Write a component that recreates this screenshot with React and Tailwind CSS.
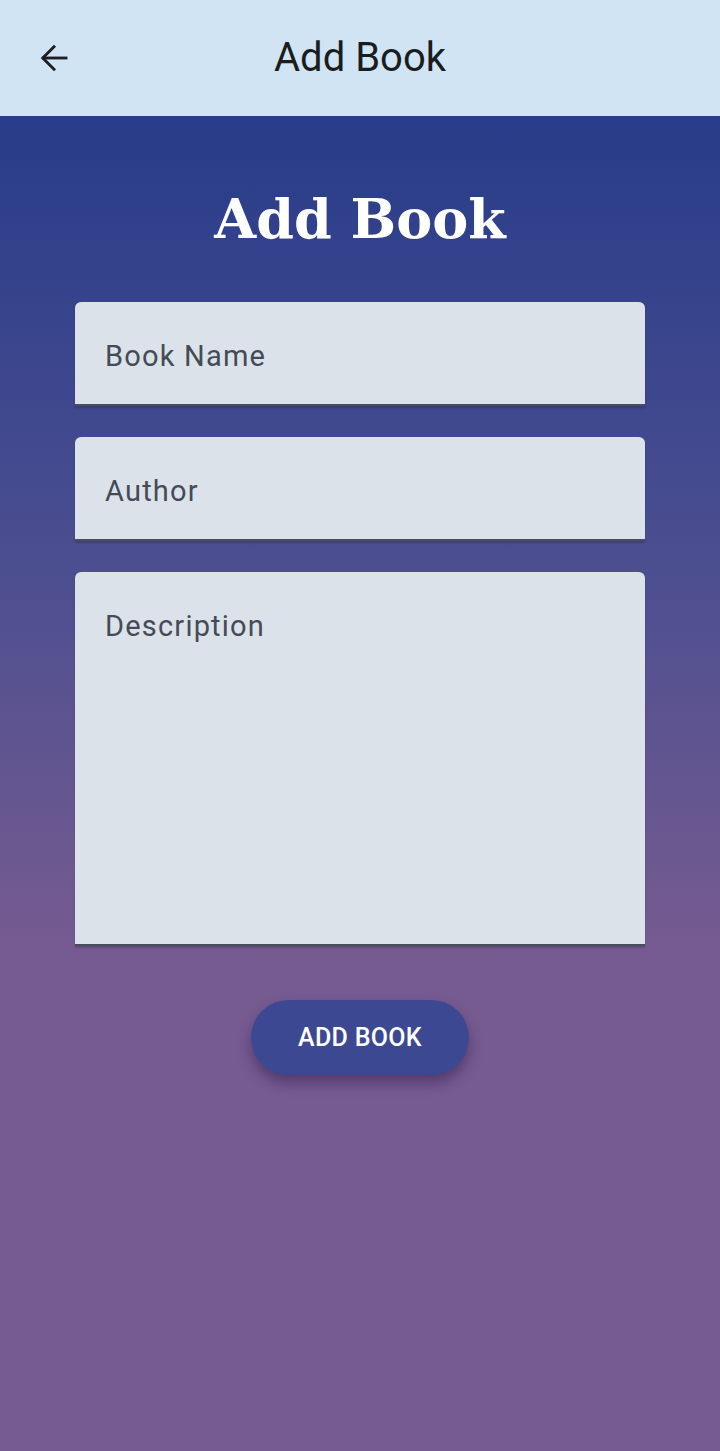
import React, { useState } from "react";

function Field({ label, tall }) {
  const [value, setValue] = useState("");
  return (
    <div
      className={`w-full rounded-t-[6px] bg-[#dce2ea] border-b-2 border-[#4a4d5e] shadow-[0_2px_2px_rgba(0,0,0,0.18)] ${tall ? "h-[374px]" : "h-[104px]"}`}
    >
      {tall ? (
        <textarea
          value={value}
          onChange={(e) => setValue(e.target.value)}
          placeholder={label}
          className="w-full h-full resize-none bg-transparent outline-none px-[30px] pt-[35px] text-[29px] tracking-[1.2px] leading-[38px] text-[#454b56] placeholder:text-[#454b56]"
          style={{ fontFamily: "Roboto, sans-serif" }}
        />
      ) : (
        <input
          value={value}
          onChange={(e) => setValue(e.target.value)}
          placeholder={label}
          className="w-full h-full bg-transparent outline-none px-[30px] pt-[5px] text-[29px] tracking-[1.2px] text-[#454b56] placeholder:text-[#454b56]"
          style={{ fontFamily: "Roboto, sans-serif" }}
        />
      )}
    </div>
  );
}

export default function App() {
  return (
    <div className="w-[720px] min-h-[1451px] flex flex-col font-['Roboto',sans-serif]">
      {/* App bar */}
      <div className="h-[116px] bg-[#d1e4f4] flex items-center relative">
        <button className="absolute left-[36px] top-[40px] text-[#1c1f24]">
          <svg width="36" height="36" viewBox="0 0 24 24" fill="none" stroke="currentColor" strokeWidth="1.9" strokeLinecap="square">
            <path d="M20 12H5" />
            <path d="M12 4.5L4.5 12L12 19.5" strokeLinejoin="miter" />
          </svg>
        </button>
        <div className="w-full text-center text-[40px] text-[#1a1c20] leading-none">Add Book</div>
      </div>

      {/* Body */}
      <div className="flex-1 bg-[linear-gradient(180deg,#283c89_0%,#4b4e90_33%,#6b5890_55%,#765b91_63%,#765b91_100%)] flex flex-col items-center px-[75px]">
        <h1 className="pt-[76px] text-[54px] font-bold text-white leading-none font-['DejaVu_Serif',serif]">
          Add Book
        </h1>
        <div className="w-full mt-[56px] flex flex-col gap-[31px]">
          <Field label="Book Name" />
          <Field label="Author" />
          <Field label="Description" tall />
        </div>
        <button className="mt-[54px] w-[218px] h-[75px] rounded-full bg-[#3c4891] text-white text-[25px] font-medium tracking-[0.3px] shadow-[0_8px_14px_rgba(40,20,70,0.45)]">
          ADD BOOK
        </button>
      </div>
    </div>
  );
}
